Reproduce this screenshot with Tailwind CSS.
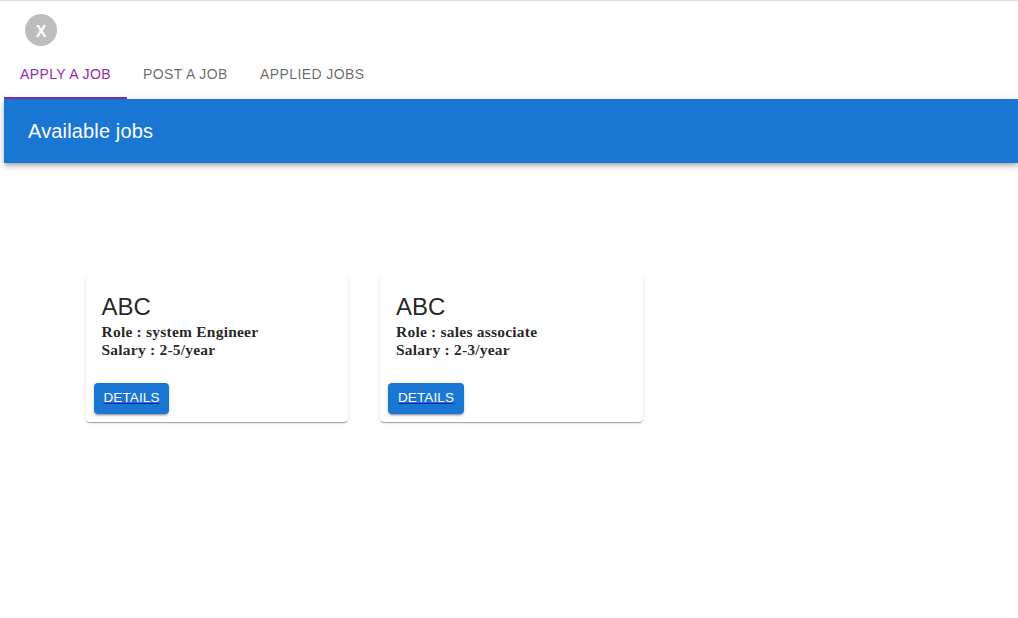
<!DOCTYPE html>
<html lang="en">
<head>
<meta charset="utf-8">
<title>Jobs</title>
<script src="https://cdn.jsdelivr.net/npm/@tailwindcss/browser@4"></script>
</head>
<body class="h-[618px] overflow-hidden border-t border-[#d9d9d9] bg-white pl-1 font-['Liberation_Sans',Arial,sans-serif] text-black/87">
  <div class="pt-[13px] pl-[21px]">
    <div class="flex size-8 items-center justify-center rounded-full bg-[#bdbdbd] pt-[3px] text-base leading-none font-bold text-white">X</div>
  </div>
  <nav class="flex h-[53px] text-sm leading-[17.5px] tracking-[0.4px] text-black/60">
    <div class="w-[123px] border-b-2 border-[#7b2fa5] pt-5 pl-4 whitespace-nowrap text-[#9c27b0]">APPLY A JOB</div>
    <div class="w-[117px] pt-5 pl-4 whitespace-nowrap">POST A JOB</div>
    <div class="w-[137px] pt-5 pl-4 whitespace-nowrap">APPLIED JOBS</div>
  </nav>
  <header class="flex h-16 items-center bg-[#1976d2] px-6 shadow-[0_2px_4px_-1px_rgba(0,0,0,.2),0_4px_5px_0_rgba(0,0,0,.14),0_1px_10px_0_rgba(0,0,0,.12)]">
    <h1 class="text-xl tracking-[0.15px] text-white">Available jobs</h1>
  </header>
  <main class="flex gap-8 pt-28 pl-[82px]">
    <article class="h-[147px] w-[262px] rounded shadow-[0_2px_1px_-1px_rgba(0,0,0,.2),0_1px_1px_0_rgba(0,0,0,.14),0_1px_3px_0_rgba(0,0,0,.12)]">
      <div class="h-[108px] px-[15.5px] pt-4">
        <h2 class="text-2xl leading-8">ABC</h2>
        <div class="font-['Liberation_Serif','Times_New_Roman',serif] text-[15.5px] leading-[18px] font-bold tracking-[0.22px]"><p>Role : system Engineer</p><p>Salary : 2-5/year</p></div>
      </div>
      <button class="ml-2 block h-[31px] w-[75px] rounded bg-[#1976d2] pb-[2px] text-[13.5px] leading-[22px] tracking-[0.1px] text-white underline decoration-[#1a1ab8] shadow-[0_3px_1px_-2px_rgba(0,0,0,.2),0_2px_2px_0_rgba(0,0,0,.14),0_1px_5px_0_rgba(0,0,0,.12)]">DETAILS</button>
    </article>
    <article class="h-[147px] w-[263px] rounded shadow-[0_2px_1px_-1px_rgba(0,0,0,.2),0_1px_1px_0_rgba(0,0,0,.14),0_1px_3px_0_rgba(0,0,0,.12)]">
      <div class="h-[108px] px-4 pt-4">
        <h2 class="text-2xl leading-8">ABC</h2>
        <div class="font-['Liberation_Serif','Times_New_Roman',serif] text-[15.5px] leading-[18px] font-bold tracking-[0.22px]"><p>Role : sales associate</p><p>Salary : 2-3/year</p></div>
      </div>
      <button class="ml-2 block h-[31px] w-[76px] rounded bg-[#1976d2] pb-[2px] text-[13.5px] leading-[22px] tracking-[0.1px] text-white underline decoration-[#1a1ab8] shadow-[0_3px_1px_-2px_rgba(0,0,0,.2),0_2px_2px_0_rgba(0,0,0,.14),0_1px_5px_0_rgba(0,0,0,.12)]">DETAILS</button>
    </article>
  </main>
</body>
</html>
